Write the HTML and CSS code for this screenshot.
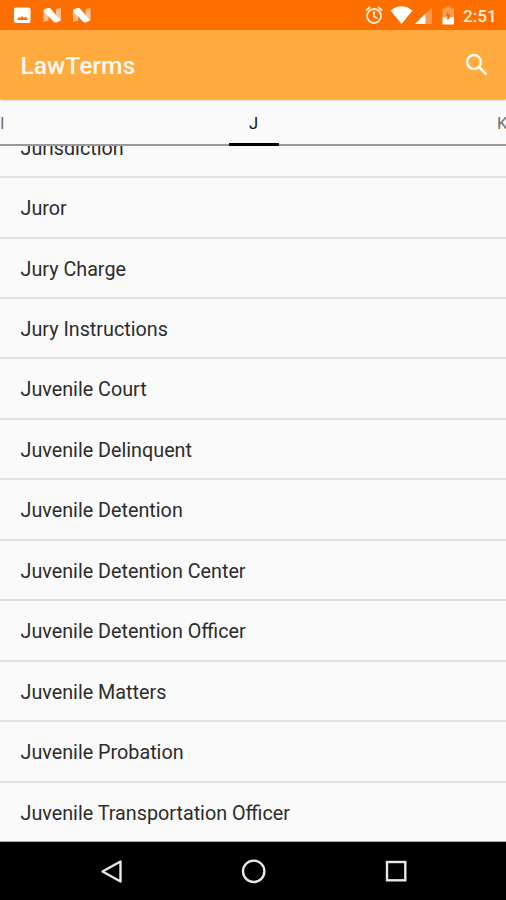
FILE: index.html
```html
<!DOCTYPE html>
<html lang="en">
<head>
<meta charset="utf-8">
<title>LawTerms</title>
<link rel="stylesheet" href="styles.css">
</head>
<body>
<div class="screen">
  <div class="status">
    <svg class="status-icons" width="92" height="30" viewBox="0 0 92 30">
      <path fill="#fff" fill-rule="evenodd" d="M16 7.500h12.500q2 0 2 2v11.500q0 2-2 2h-12.500q-2 0-2-2v-11.500q0-2 2-2zM17.500 20h10v-1.500l-2-2-1.500 1.500-2-2-2 2-1-1-1.500 1.500z"/>
      <g id="n-logo">
        <path fill="#fff" opacity=".55" d="M43.500 9.500l5-1v12l-5 1.500zM56 9l5-1v13l-5 1z"/>
        <path fill="#fff" d="M44 9.500l4-1.500h2L60.500 20l-4 2.500h-2L44 12z"/>
      </g>
      <use href="#n-logo" x="29.500"/>
    </svg>
    <svg class="status-icons" width="96" height="30" viewBox="362 0 96 30">
      <g fill="none" stroke="#ffeede" stroke-width="1.800">
        <circle cx="374" cy="16" r="7"/>
        <path d="M374 11.500v5l3.500 2M366 10.500l4-3.500M382 10.500l-4-3.500"/>
      </g>
      <path fill="#fff" d="M390.500 10.500q11-8.500 22 0L401.500 24z"/>
      <path fill="#fff" opacity=".3" d="M432 7.500V24h-17z"/>
      <path fill="#fff" d="M425.500 13.500V24H415z"/>
      <path fill="#fff" opacity=".35" d="M442.500 8.500h3v-2h5v2h3.500V18h-11.500z"/>
      <path fill="#fff" d="M442.500 17h3l2.500 2.500 2.500-2.500h3.500v7.500h-11.500z"/>
      <path fill="#ff6f00" d="M448.500 10.500v4h2.500l-3.500 6v-4.500h-2.300z"/>
    </svg>
    <span class="clock">2:51</span>
  </div>
  <header class="app-bar">
    <h1>LawTerms</h1>
    <svg width="24" height="24" viewBox="0 0 24 24" fill="none" stroke="#fffaf0" stroke-width="2.500"><circle cx="9" cy="9" r="6.900"/><path d="M14 14l7.500 7.500"/></svg>
  </header>
  <nav class="tabs">
    <span class="tab">I</span>
    <span class="tab active">J</span>
    <span class="tab next">K</span>
  </nav>
  <main class="viewport">
    <ul class="list">
      <li>Jurisdiction</li>
      <li>Juror</li>
      <li>Jury Charge</li>
      <li>Jury Instructions</li>
      <li>Juvenile Court</li>
      <li>Juvenile Delinquent</li>
      <li>Juvenile Detention</li>
      <li>Juvenile Detention Center</li>
      <li>Juvenile Detention Officer</li>
      <li>Juvenile Matters</li>
      <li>Juvenile Probation</li>
      <li>Juvenile Transportation Officer</li>
    </ul>
  </main>
  <footer class="nav-bar">
    <svg width="506" height="58" viewBox="0 842 506 58" fill="none" stroke="#e8e8e8" stroke-width="2.400">
      <path d="M120.500 861.500v20L102.500 871.500z" stroke-linejoin="round"/>
      <circle cx="253.700" cy="871.300" r="10.700"/>
      <rect x="387" y="862" width="18.300" height="18.300"/>
    </svg>
  </footer>
</div>
</body>
</html>
```
FILE: styles.css
```css
* { box-sizing: border-box; }
body { margin: 0; font-family: Roboto, "Liberation Sans", sans-serif; }
.screen {
  width: 506px;
  height: 900px;
  display: flex;
  flex-direction: column;
  overflow: hidden;
  background: #fafafa;
}
.status {
  height: 30px;
  flex: none;
  display: flex;
  background: #ff6f00;
}
.status-icons { flex: none; }
.status-icons + .status-icons { margin-left: auto; }
.clock {
  width: 48px;
  padding-left: 5px;
  font-size: 17.200px;
  font-weight: 500;
  line-height: 32px;
  color: #ffeede;
}
.app-bar {
  height: 69px;
  flex: none;
  display: flex;
  align-items: center;
  justify-content: space-between;
  padding: 0 17px 0 20.500px;
  background: #ffab40;
  color: #fffaf0;
  box-shadow: 0 1px 2px rgba(0, 0, 0, .35);
  z-index: 1;
}
.app-bar h1 {
  margin: 2px 0 0;
  font-size: 24.600px;
  font-weight: 500;
}
.tabs {
  height: 47px;
  flex: none;
  display: flex;
  justify-content: space-between;
  border-bottom: 2px solid #9a9a9a;
  font-size: 16.500px;
  line-height: 49px;
  color: #707070;
}
.tab { width: 50px; }
.active {
  height: 47px;
  border-bottom: 3px solid #000;
  border-radius: 1px;
  text-align: center;
  color: #111;
}
.next {
  padding-left: 56px;
  width: 67px;
  margin: 0 -1px 0 -17px;
  padding-left: 57px;
}
.viewport {
  flex: 1;
  min-height: 0;
  overflow: hidden;
}
.list {
  list-style: none;
  margin: -28.300px 0 0;
  padding: 0;
}
.list li {
  height: 60.450px;
  padding-left: 20.500px;
  border-bottom: 2px solid #e2e2e2;
  font-size: 19.750px;
  line-height: 62px;
  color: #2c2c2c;
}
.list li:last-child { border-bottom-color: #aaa; }
.nav-bar {
  height: 58px;
  flex: none;
  background: #000;
}
.nav-bar svg { display: block; }
```
